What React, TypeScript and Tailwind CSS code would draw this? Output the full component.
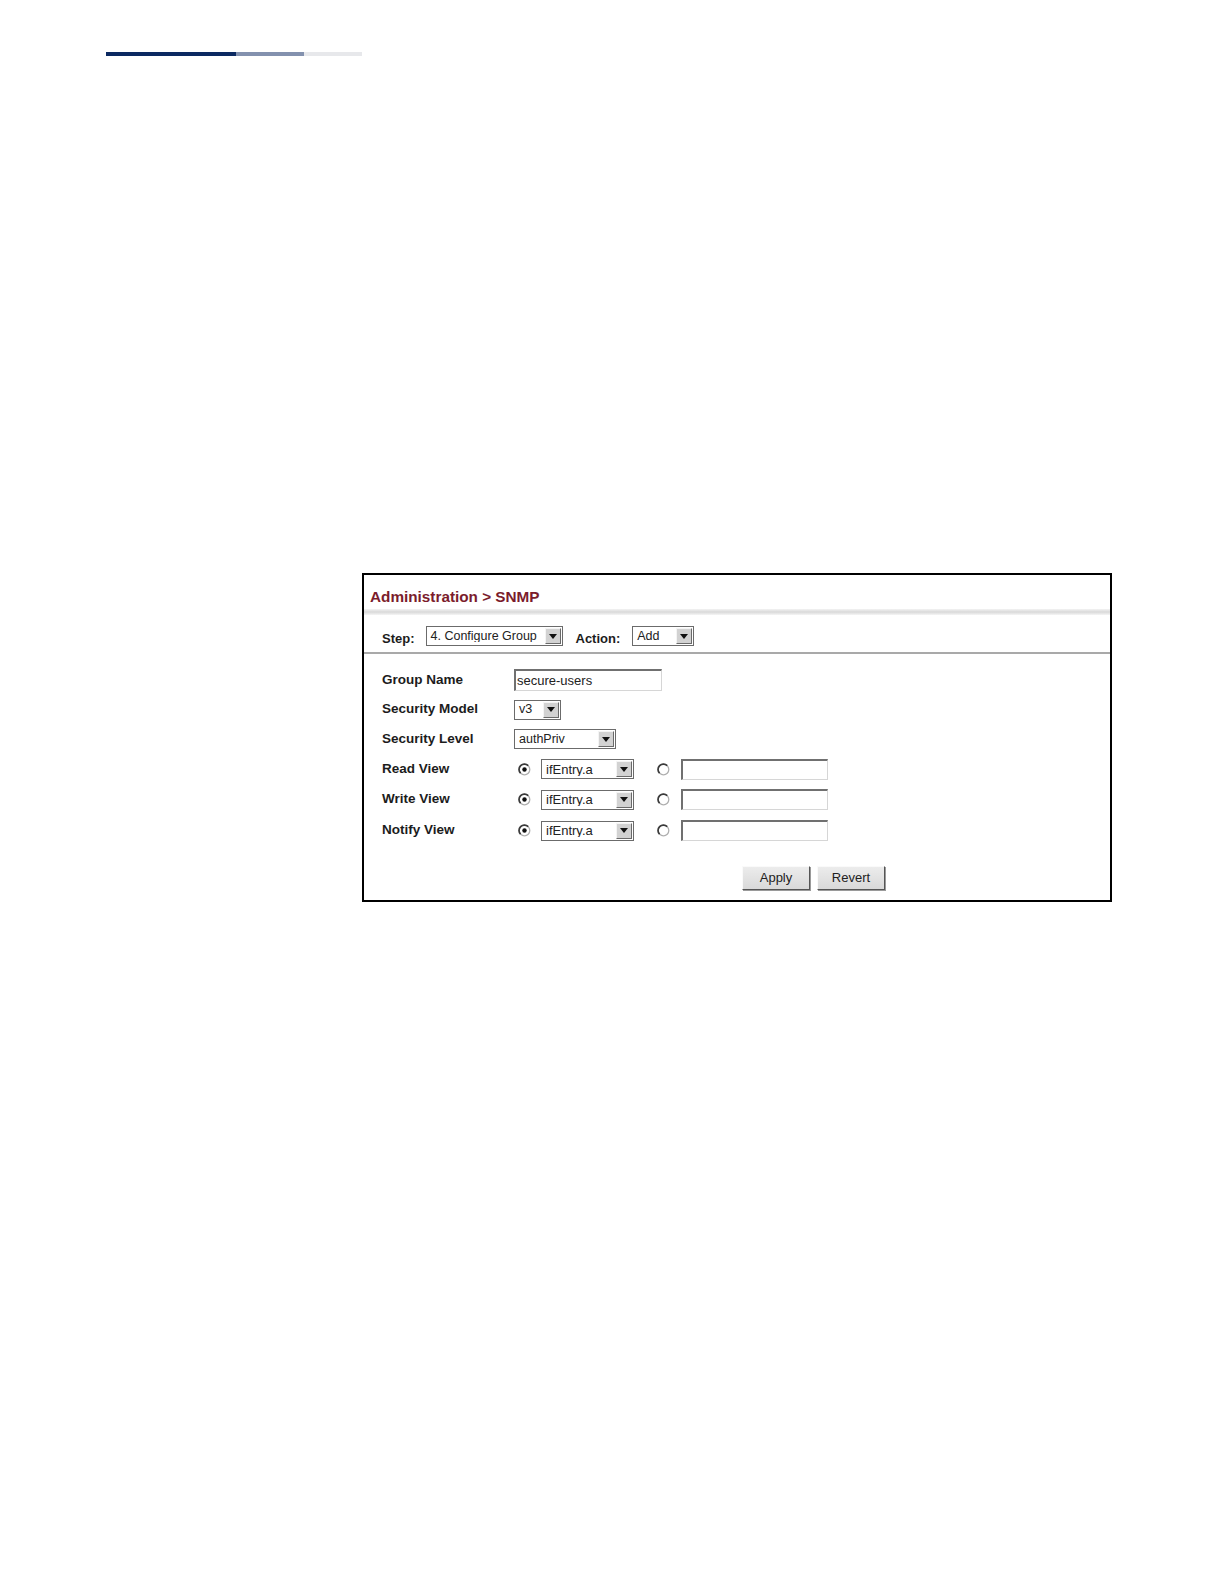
const font = { fontFamily: '"Liberation Sans", Arial, Helvetica, sans-serif' };

function Arrow() {
  return (
    <div className="flex h-[16px] w-[16px] shrink-0 items-center justify-center border border-t-[#f4f4f4] border-l-[#f4f4f4] border-r-[#6a6a6a] border-b-[#6a6a6a] bg-[#d2d2d2]">
      <svg width="8" height="5" viewBox="0 0 8 5">
        <path d="M0 0 L8 0 L4 5 Z" fill="#111" />
      </svg>
    </div>
  );
}

function Select({ value, width, size = "text-[12.5px]" }: { value: string; width: string; size?: string }) {
  return (
    <div className={`flex h-[20px] items-center border border-[#6b6b6b] bg-white pr-[1px] ${width}`}>
      <span className={`flex-1 truncate pl-[4px] leading-none text-[#222] ${size}`}>{value}</span>
      <Arrow />
    </div>
  );
}

function Radio({ checked }: { checked: boolean }) {
  return (
    <svg width="13" height="13" viewBox="0 0 13 13" className="shrink-0">
      <circle cx="6.5" cy="6.5" r="5.3" fill="#fff" stroke="#b0b0b0" strokeWidth="1.3" />
      <path d="M2.6 10.2 A5.3 5.3 0 0 1 10.2 2.6" fill="none" stroke="#3a3a3a" strokeWidth="1.7" />
      {checked && <circle cx="6.5" cy="6.5" r="2.2" fill="#111" />}
    </svg>
  );
}

function TextBox({ value, width, height }: { value?: string; width: string; height: string }) {
  return (
    <div
      className={`flex items-center border-2 border-t-[#707070] border-l-[#707070] border-r-[#d6d6d6] border-b-[#d6d6d6] border-r-1 border-b-1 bg-white pl-[1px] text-[13px] leading-none text-[#222] ${width} ${height}`}
    >
      {value}
    </div>
  );
}

function Label({ children }: { children: string }) {
  return <div className="w-[132px] shrink-0 text-[13.5px] font-bold text-[#1c1c1c]">{children}</div>;
}

function ViewRow({ label, h }: { label: string; h: string }) {
  return (
    <div className={`flex items-center ${h}`}>
      <Label>{label}</Label>
      <div className="ml-[4px] flex items-center">
        <Radio checked />
        <div className="ml-[10px]">
          <Select value="ifEntry.a" width="w-[93px]" size="text-[13px]" />
        </div>
        <div className="ml-[23px]">
          <Radio checked={false} />
        </div>
        <div className="ml-[11px]">
          <TextBox width="w-[147px]" height="h-[21px]" />
        </div>
      </div>
    </div>
  );
}

function Button({ children }: { children: string }) {
  return (
    <div className="flex h-[24px] w-[68px] items-center justify-center border border-t-[#fafafa] border-l-[#fafafa] border-r-[#555] border-b-[#555] bg-linear-to-b from-[#ececec] to-[#d9d9d9] text-[13px] text-[#222] shadow-[1px_1px_0_#9a9a9a]">
      {children}
    </div>
  );
}

export default function App() {
  return (
    <div className="h-[1584px] w-full bg-white" style={font}>
      <div className="flex pl-[106px] pt-[52px]">
        <div className="h-[4px] w-[130px] bg-[#0b2961]" />
        <div className="h-[4px] w-[68px] bg-[#8391ae]" />
        <div className="h-[4px] w-[58px] bg-[#e7e8eb]" />
      </div>

      <div className="ml-[362px] mt-[517px] h-[329px] w-[750px] border-2 border-black bg-white">
        <div className="pl-[6px] pt-[13px] text-[15.3px] font-bold leading-[18px] text-[#7b1c2c]">
          Administration &gt; SNMP
        </div>
        <div className="mt-[3px] h-[6px] bg-linear-to-b from-[#f3f3f3] via-[#d9d9d9] to-[#f5f5f5]" />

        <div className="mt-[11px] flex h-[20px] items-center pl-[18px]">
          <span className="mt-[5px] text-[13px] font-bold text-[#1c1c1c]">Step:</span>
          <div className="ml-[11px]">
            <Select value="4. Configure Group" width="w-[137px]" />
          </div>
          <span className="ml-[13px] mt-[5px] text-[13px] font-bold text-[#1c1c1c]">Action:</span>
          <div className="ml-[12px]">
            <Select value="Add" width="w-[62px]" />
          </div>
        </div>
        <div className="mt-[6px] h-[2px] bg-[#a9a9a9]" />

        <div className="mt-[11px] pl-[18px]">
          <div className="flex h-[30px] items-center">
            <Label>Group Name</Label>
            <TextBox value="secure-users" width="w-[148px]" height="h-[22px]" />
          </div>
          <div className="flex h-[29px] items-center">
            <Label>Security Model</Label>
            <Select value="v3" width="w-[47px]" />
          </div>
          <div className="flex h-[30px] items-center">
            <Label>Security Level</Label>
            <Select value="authPriv" width="w-[102px]" />
          </div>
          <ViewRow label="Read View" h="h-[30px]" />
          <ViewRow label="Write View" h="h-[31px]" />
          <ViewRow label="Notify View" h="h-[31px]" />

          <div className="mt-[20px] flex gap-[7px] pl-[360px]">
            <Button>Apply</Button>
            <Button>Revert</Button>
          </div>
        </div>
      </div>
    </div>
  );
}
